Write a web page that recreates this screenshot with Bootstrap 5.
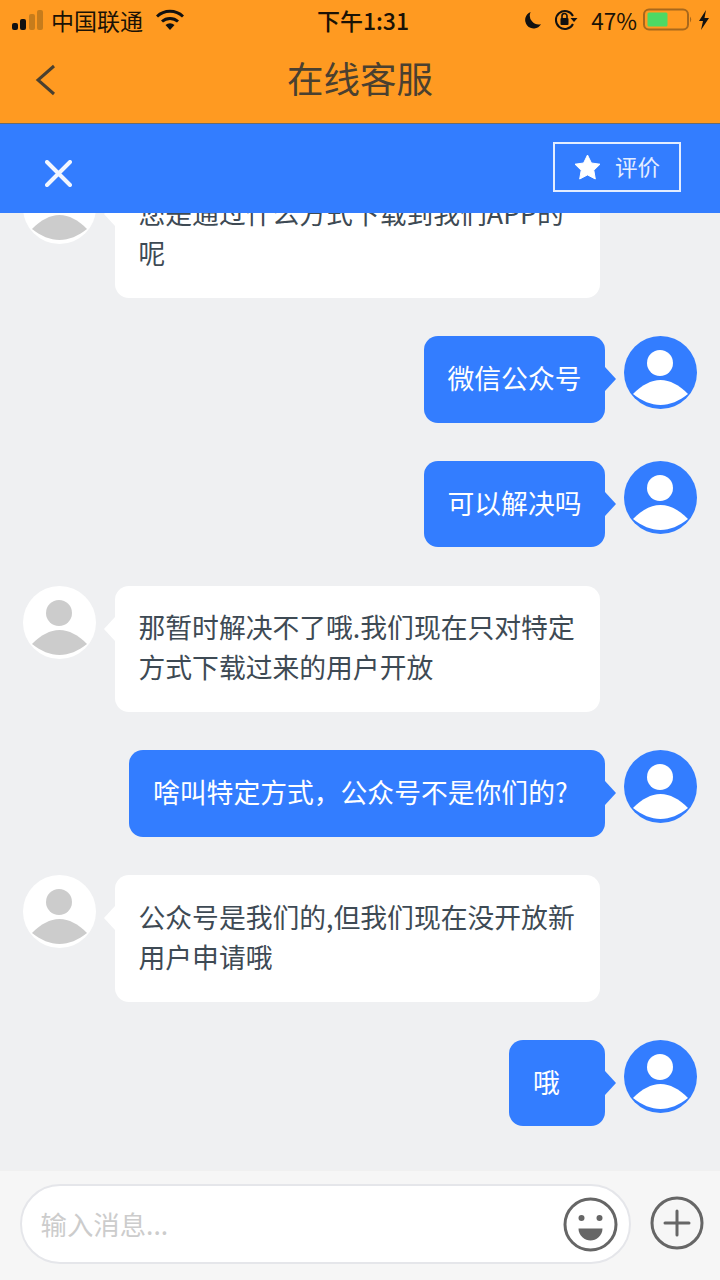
<!DOCTYPE html>
<html lang="zh-CN">
<head>
<meta charset="utf-8">
<title>在线客服</title>
<link href="https://cdn.jsdelivr.net/npm/bootstrap@5.3.0/dist/css/bootstrap.min.css" rel="stylesheet">
<style>
html,body{height:100%;margin:0}
body{font-family:"Noto Sans CJK SC","Liberation Sans",sans-serif;background:#eff0f2;color:#3e4a54}
.screen{width:720px;height:1280px;overflow:hidden}
.top-orange{background:#ff9a21;height:124px;border-bottom:1px solid #6b6b6b;flex:none}
.status{height:40px;padding:0 10px 0 11px;font-size:22.5px;color:#1a1206;line-height:40px}
.status-side{flex:1 1 0;min-width:0}
.status-time{font-size:23px;font-weight:500;font-family:"Noto Sans CJK SC",sans-serif;padding-left:5px}
.status-carrier{margin:0 13px 0 7px;font-size:23px}
.nav-line{height:83px;padding:0 0 4px 34px;position:relative}
.nav-title{font-size:36.5px;color:#4a4030;position:absolute;left:0;right:0;top:13px;text-align:center;line-height:50px}
.blue-bar{background:#337dff;height:89px;flex:none;padding:18px 39px 0 45px;z-index:2}
.close-ic{margin-top:18px}
.rate-box{width:128px;height:50px;border:2px solid #e4edff;color:#e4edff;font-size:22.5px;gap:14px}
.chat{flex:1 1 0;min-height:0;overflow:hidden;padding:0 23px 43.6px;gap:38.4px;justify-content:flex-end}
.msg-row{gap:19px;flex:none}
.ava{width:73px;height:73px;flex:none}
.bubble{position:relative;border-radius:14px;font-size:26.8px;line-height:40px;padding:21.8px 22px 24.6px 23.5px;min-width:96px;white-space:nowrap}
.bubble-in{background:#fff;width:485px;color:#3e4a54}
.bubble-out{background:#337dff;color:#fff;padding-left:24px;padding-right:23.5px}
.bubble-long{width:476px}
.bubble::after{content:"";position:absolute;top:31px;border-top:12px solid transparent;border-bottom:12px solid transparent}
.bubble-in::after{left:-11px;border-right:11px solid #fff}
.bubble-out::after{right:-11px;border-left:11px solid #337dff}
.foot{height:110px;background:#f6f6f6;border-top:1px solid #f0f0f0;flex:none;padding:13px 16px 0 19.5px;gap:19px}
.msg-input{width:612px;height:80px;border:2px solid #e5e6ea;background:#fff;border-radius:40px;padding:0 11px 0 19px}
.ph{font-size:26.4px;color:#ccc;flex:1 1 auto;padding-bottom:1px}
.plus-ic{flex:none;margin-top:12px}
.av-in{--b:#fff;--h:#ccc}
.av-out{--b:#337dff;--h:#fff}
</style>
</head>
<body>
<svg width="0" height="0" class="position-absolute">
<symbol id="av" viewBox="0 0 73 73">
<circle cx="36.5" cy="36.5" r="36.5" style="fill:var(--b)"/>
<circle cx="36" cy="27" r="13" style="fill:var(--h)"/>
<path d="M9 58C18 49 27 44 36.500 44C46 44 55 49 64 58C55 65 46 69 36.500 69C27 69 18 65 9 58Z" style="fill:var(--h)"/>
</symbol>
</svg>
<div class="screen d-flex flex-column">
  <div class="top-orange">
    <div class="status d-flex align-items-center">
      <div class="status-side d-flex align-items-center">
        <svg width="33" height="24" viewBox="0 0 33 24"><rect x="1" y="15" width="6" height="7" rx="2" fill="#111"/><rect x="9" y="11" width="6" height="11" rx="2" fill="#111"/><rect x="18" y="6" width="6" height="16" rx="2" fill="#c67c1c"/><rect x="26" y="2" width="6" height="20" rx="2" fill="#c67c1c"/></svg>
        <span class="status-carrier">中国联通</span>
        <svg width="28" height="22" viewBox="0 0 28 22"><path d="M1 7.500A19 19 0 0 1 27 7.500" fill="none" stroke="#111" stroke-width="3"/><path d="M6 12.500A12 12 0 0 1 22 12.500" fill="none" stroke="#111" stroke-width="3"/><path d="M9.500 16A7 7 0 0 1 18.500 16L14 21Z" fill="#111"/></svg>
      </div>
      <div class="status-time">下午1:31</div>
      <div class="status-side d-flex align-items-center justify-content-end">
        <svg width="19" height="19" viewBox="0 0 20 20"><path d="M8 1A9 9 0 1 0 19 14A9.500 9.500 0 0 1 8 1Z" fill="#111"/></svg>
        <svg width="24" height="22" viewBox="0 0 24 22" style="margin:0 13px 0 12px"><path d="M19 7A9 9 0 1 0 19 15" fill="none" stroke="#111" stroke-width="2"/><path d="M16.500 9h7l-3.500 4Z" fill="#111"/><rect x="6.500" y="9" width="8" height="7" rx="1" fill="#111"/><path d="M8 9V7a2.500 2.500 0 0 1 5 0V9" fill="none" stroke="#111" stroke-width="1.600"/></svg>
        <span style="margin-right:6px">47%</span>
        <svg width="51" height="24" viewBox="0 0 51 24"><rect x="1" y="1.500" width="44" height="20" rx="5" fill="none" stroke="#a8681c" stroke-width="2"/><rect x="4.500" y="4.500" width="20" height="14" rx="1.500" fill="#4cd964"/><path d="M47 8.500q2.500 3 0 6Z" fill="#a8681c"/></svg>
        <svg width="12" height="20" viewBox="0 0 12 20" class="ms-1"><path d="M8 0L1 11h4l-2 9 8-12H6.500Z" fill="#111"/></svg>
      </div>
    </div>
    <div class="nav-line d-flex align-items-center">
      <svg width="24" height="32" viewBox="0 0 24 32"><path d="M20 2L4 16L20 30" fill="none" stroke="#4a4030" stroke-width="3"/></svg>
      <div class="nav-title">在线客服</div>
    </div>
  </div>
  <div class="blue-bar d-flex justify-content-between align-items-start">
    <svg class="close-ic" width="27" height="27" viewBox="0 0 27 27"><path d="M2 2L25 25M25 2L2 25" stroke="#f2f6ff" stroke-width="4" stroke-linecap="round"/></svg>
    <div class="rate-box d-flex align-items-center justify-content-center">
      <svg width="27" height="26" viewBox="0 0 27 26"><path d="M13.500 1l3.900 8 8.600 1.200-6.200 6.100 1.500 8.700-7.800-4.100-7.800 4.100 1.500-8.700L1 10.200 9.600 9Z" fill="#fff" stroke="#fff" stroke-linejoin="round"/></svg>
      <span>评价</span>
    </div>
  </div>
  <div class="chat d-flex flex-column">
    <div class="msg-row d-flex align-items-start">
      <svg class="ava av-in"><use href="#av"/></svg>
      <div class="bubble bubble-in">您是通过什么方式下载到我们APP的<br>呢</div>
    </div>
    <div class="msg-row d-flex align-items-start justify-content-end">
      <div class="bubble bubble-out">微信公众号</div>
      <svg class="ava av-out"><use href="#av"/></svg>
    </div>
    <div class="msg-row d-flex align-items-start justify-content-end">
      <div class="bubble bubble-out">可以解决吗</div>
      <svg class="ava av-out"><use href="#av"/></svg>
    </div>
    <div class="msg-row d-flex align-items-start">
      <svg class="ava av-in"><use href="#av"/></svg>
      <div class="bubble bubble-in">那暂时解决不了哦.我们现在只对特定<br>方式下载过来的用户开放</div>
    </div>
    <div class="msg-row d-flex align-items-start justify-content-end">
      <div class="bubble bubble-out bubble-long">啥叫特定方式，公众号不是你们的?</div>
      <svg class="ava av-out"><use href="#av"/></svg>
    </div>
    <div class="msg-row d-flex align-items-start">
      <svg class="ava av-in"><use href="#av"/></svg>
      <div class="bubble bubble-in">公众号是我们的,但我们现在没开放新<br>用户申请哦</div>
    </div>
    <div class="msg-row d-flex align-items-start justify-content-end">
      <div class="bubble bubble-out">哦</div>
      <svg class="ava av-out"><use href="#av"/></svg>
    </div>
  </div>
  <div class="foot d-flex align-items-start">
    <div class="msg-input d-flex align-items-center">
      <span class="ph">输入消息...</span>
      <svg width="55" height="55" viewBox="0 0 55 55"><circle cx="27.500" cy="27.500" r="25.500" fill="#fff" stroke="#666" stroke-width="3"/><circle cx="18.500" cy="21" r="3" fill="#666"/><circle cx="36.500" cy="21" r="3" fill="#666"/><path d="M15.500 31.500H39.500C39.500 39 33 43.500 27.500 43.500S15.500 39 15.500 31.500Z" fill="#666"/></svg>
    </div>
    <svg width="54" height="54" viewBox="0 0 54 54" class="plus-ic"><circle cx="27" cy="27" r="25" fill="none" stroke="#666" stroke-width="3"/><path d="M15 27H39M27 15V39" stroke="#666" stroke-width="3" stroke-linecap="round"/></svg>
  </div>
</div>
<script src="https://cdn.jsdelivr.net/npm/bootstrap@5.3.0/dist/js/bootstrap.bundle.min.js"></script>
</body>
</html>
